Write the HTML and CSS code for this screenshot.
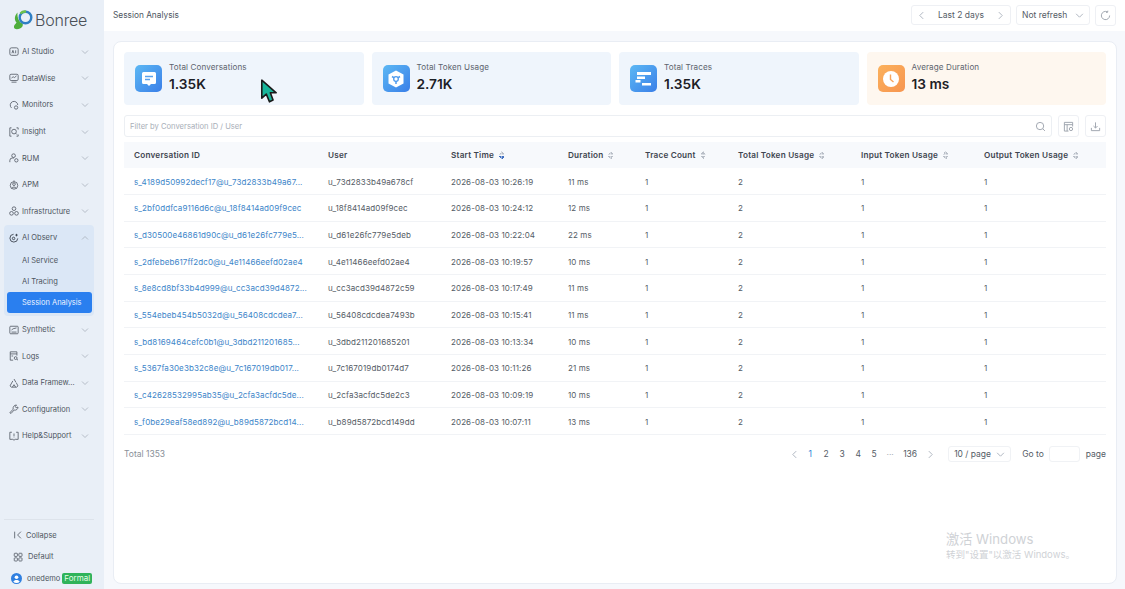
FILE: index.html
```html
<!DOCTYPE html>
<html lang="en">
<head>
    <meta charset="UTF-8">
    <meta name="viewport" content="width=device-width, initial-scale=1.0">
    <title>Session Analysis</title>
    <link rel="stylesheet" href="styles.css">
</head>
<body>
<div class="app">
    <aside class="sidebar">
        <div class="logo">
            <svg class="logo-mark" viewBox="0 0 22 22"><path d="M4.500 3.500C1.500 6.500 1 11 3.500 13.500 2.500 15 .5 16.500 1 18.500 1.500 20.500 4.500 20.500 7 19.500 9.500 18.500 10.500 16 9.500 14.500 6.500 13.500 4 9 4.500 3.500z" fill="#4fae3c"/><circle cx="12.500" cy="8.500" r="5.800" fill="none" stroke="#2f7fc4" stroke-width="2.400"/><path d="M7.500 4.500A6 6 0 0 1 13 2.700" fill="none" stroke="#6fc24a" stroke-width="2.400"/></svg>
            <span class="logo-text">Bonree</span>
        </div>
        <nav class="nav">
            <div class="nav-item">
                <svg class="nav-icon" viewBox="0 0 12 12"><rect x="1" y="1" width="10" height="9" rx="2"/><path d="M3.500 7.500 4.700 4l1.200 3.500M8 4v3.500"/></svg>
                <span class="nav-label">AI Studio</span>
                <svg class="chev" viewBox="0 0 8 8"><path d="M1 2.500 4 5.500 7 2.500"/></svg>
            </div>
            <div class="nav-item">
                <svg class="nav-icon" viewBox="0 0 12 12"><rect x="1" y="1.500" width="10" height="7.500" rx="1.500"/><path d="M3 6 5 4.500 6.500 5.500 9 3.500M3 11h6"/></svg>
                <span class="nav-label">DataWise</span>
                <svg class="chev" viewBox="0 0 8 8"><path d="M1 2.500 4 5.500 7 2.500"/></svg>
            </div>
            <div class="nav-item">
                <svg class="nav-icon" viewBox="0 0 12 12"><path d="M3 9.500A4.500 4.500 0 1 1 10.500 6"/><circle cx="8.500" cy="9" r="2"/></svg>
                <span class="nav-label">Monitors</span>
                <svg class="chev" viewBox="0 0 8 8"><path d="M1 2.500 4 5.500 7 2.500"/></svg>
            </div>
            <div class="nav-item">
                <svg class="nav-icon" viewBox="0 0 12 12"><path d="M3 1H1v10h2M9 1h2v2M11 9v2H9"/><circle cx="6" cy="5.500" r="2.800"/><path d="M8 7.500 9.500 9"/></svg>
                <span class="nav-label">Insight</span>
                <svg class="chev" viewBox="0 0 8 8"><path d="M1 2.500 4 5.500 7 2.500"/></svg>
            </div>
            <div class="nav-item">
                <svg class="nav-icon" viewBox="0 0 12 12"><circle cx="5.500" cy="3.200" r="2.200"/><path d="M1 11V9a3 3 0 0 1 3-3h2"/><circle cx="8.800" cy="8.800" r="2"/></svg>
                <span class="nav-label">RUM</span>
                <svg class="chev" viewBox="0 0 8 8"><path d="M1 2.500 4 5.500 7 2.500"/></svg>
            </div>
            <div class="nav-item">
                <svg class="nav-icon" viewBox="0 0 12 12"><circle cx="6" cy="6.500" r="4.500"/><circle cx="6" cy="5" r="1.600"/><path d="M3.200 10c.5-2 5-2 5.600 0M6 .5v1.500"/></svg>
                <span class="nav-label">APM</span>
                <svg class="chev" viewBox="0 0 8 8"><path d="M1 2.500 4 5.500 7 2.500"/></svg>
            </div>
            <div class="nav-item">
                <svg class="nav-icon" viewBox="0 0 12 12"><circle cx="6" cy="3.200" r="2.200"/><circle cx="3" cy="8.800" r="2.200"/><circle cx="9" cy="8.800" r="2.200"/></svg>
                <span class="nav-label">Infrastructure</span>
                <svg class="chev" viewBox="0 0 8 8"><path d="M1 2.500 4 5.500 7 2.500"/></svg>
            </div>
            <div class="nav-group">
                <div class="nav-item">
                    <svg class="nav-icon nav-icon-dark" viewBox="0 0 12 12"><path d="M10.500 6.500A4.700 4.700 0 1 1 5.500 1.500"/><circle cx="5.500" cy="6.500" r="1.500"/><path d="M9 1v3M7.500 2.500h3"/></svg>
                    <span class="nav-label">AI Observ</span>
                    <svg class="chev" viewBox="0 0 8 8"><path d="M1 5.500 4 2.500 7 5.500"/></svg>
                </div>
                <div class="sub-list">
                    <div class="sub-item">AI Service</div>
                    <div class="sub-item">AI Tracing</div>
                    <div class="sub-item sub-active">Session Analysis</div>
                </div>
            </div>
            <div class="nav-item">
                <svg class="nav-icon" viewBox="0 0 12 12"><rect x="1" y="1.500" width="10" height="9" rx="1"/><path d="M3 6 5 4.500 9 3.500M3 8.500h6"/></svg>
                <span class="nav-label">Synthetic</span>
                <svg class="chev" viewBox="0 0 8 8"><path d="M1 2.500 4 5.500 7 2.500"/></svg>
            </div>
            <div class="nav-item">
                <svg class="nav-icon" viewBox="0 0 12 12"><path d="M5 11H1.500V1h8v4.500M1.500 3.500h8M3 6h2"/><circle cx="8" cy="8.500" r="1.700"/><path d="M9.300 9.800 10.800 11"/></svg>
                <span class="nav-label">Logs</span>
                <svg class="chev" viewBox="0 0 8 8"><path d="M1 2.500 4 5.500 7 2.500"/></svg>
            </div>
            <div class="nav-item">
                <svg class="nav-icon" viewBox="0 0 12 12"><path d="M6 1.200 8.200 5M4.600 3.500 1.200 9.500 3 11h6l1.800-1.500L8.600 5.500M4 11l2-3 2 3"/></svg>
                <span class="nav-label">Data Framew...</span>
                <svg class="chev" viewBox="0 0 8 8"><path d="M1 2.500 4 5.500 7 2.500"/></svg>
            </div>
            <div class="nav-item">
                <svg class="nav-icon" viewBox="0 0 12 12"><path d="M1 10.500 5 6.200C4.300 4 6 1 9 1.200L7.500 3.200 8.600 4.600l2.200-1C11 6 8.500 8 6.200 7.200L2.500 11.300z"/></svg>
                <span class="nav-label">Configuration</span>
                <svg class="chev" viewBox="0 0 8 8"><path d="M1 2.500 4 5.500 7 2.500"/></svg>
            </div>
            <div class="nav-item">
                <svg class="nav-icon" viewBox="0 0 12 12"><path d="M3.500 1.500H1v8.500h3.500L6 11l1.500-1H11V1.500H8.500M6 3v3.500M6 8v.5"/></svg>
                <span class="nav-label">Help&amp;Support</span>
                <svg class="chev" viewBox="0 0 8 8"><path d="M1 2.500 4 5.500 7 2.500"/></svg>
            </div>
        </nav>
        <div class="side-foot">
            <div class="foot-row foot-collapse">
                <svg class="foot-icon" viewBox="0 0 12 12"><path d="M2 2v8M9.500 2 5.500 6l4 4"/></svg>
                <span>Collapse</span>
            </div>
            <div class="foot-row foot-default">
                <svg class="foot-icon" viewBox="0 0 12 12"><rect x="1.500" y="1.500" width="3.800" height="3.800" rx=".8"/><rect x="7" y="1.500" width="3.800" height="3.800" rx=".8"/><rect x="1.500" y="7" width="3.800" height="3.800" rx=".8"/><rect x="7" y="7" width="3.800" height="3.800" rx=".8"/></svg>
                <span>Default</span>
            </div>
            <div class="foot-row foot-user">
                <svg class="avatar" viewBox="0 0 12 12"><circle cx="6" cy="6" r="6" fill="#2f7fe0"/><circle cx="6" cy="4.600" r="2" fill="#fff"/><path d="M2.500 9.500c1-2.500 6-2.500 7 0a5 5 0 0 1-7 0z" fill="#fff"/></svg>
                <span>onedemo</span>
                <span class="formal">Formal</span>
            </div>
        </div>
    </aside>

    <div class="page">
        <header class="topbar">
            <div class="page-title">Session Analysis</div>
            <div class="top-tools">
                <div class="tool range">
                    <svg class="chev chev-lg" viewBox="0 0 8 8"><path d="M5.500 1 2.500 4l3 3"/></svg>
                    <span>Last 2 days</span>
                    <svg class="chev chev-lg" viewBox="0 0 8 8"><path d="M2.500 1l3 3-3 3"/></svg>
                </div>
                <div class="tool refresh-select">
                    <span>Not refresh</span>
                    <svg class="chev chev-lg" viewBox="0 0 8 8"><path d="M1 2.500 4 5.500 7 2.500"/></svg>
                </div>
                <div class="tool tool-square">
                    <svg class="tool-icon" viewBox="0 0 12 12"><path d="M10.500 6A4.500 4.500 0 1 1 8 2M8.500.8 8.300 2.500l-1.700.2"/></svg>
                </div>
            </div>
        </header>

        <main class="card">
            <section class="stats">
                <div class="stat">
                    <div class="stat-icon icon-blue">
                        <svg width="20" height="20" viewBox="0 0 20 20"><path d="M4.500 3h11A1.500 1.500 0 0 1 17 4.500v9a1.500 1.500 0 0 1-1.500 1.500H12l-2 2-2-2H4.500A1.500 1.500 0 0 1 3 13.500v-9A1.500 1.500 0 0 1 4.500 3z" fill="#fff"/><path d="M6 7.500h8M6 10.500h5" stroke="#5aa2ee" stroke-width="1.300"/></svg>
                    </div>
                    <div class="stat-text">
                        <div class="stat-label">Total Conversations</div>
                        <div class="stat-value">1.35K</div>
                    </div>
                </div>
                <div class="stat">
                    <div class="stat-icon icon-blue">
                        <svg width="20" height="20" viewBox="0 0 20 20"><path d="M10 1.500 17.500 5.500v9L10 18.500 2.500 14.500v-9z" fill="#fff"/><path d="M6 7.500 8.200 8.800M14 7.500 11.800 8.800M10 12v3" stroke="#4f9bee" stroke-width="1.500" fill="none"/><circle cx="10" cy="10" r="2.300" fill="none" stroke="#4f9bee" stroke-width="1.300"/></svg>
                    </div>
                    <div class="stat-text">
                        <div class="stat-label">Total Token Usage</div>
                        <div class="stat-value">2.71K</div>
                    </div>
                </div>
                <div class="stat">
                    <div class="stat-icon icon-blue">
                        <svg width="20" height="20" viewBox="0 0 20 20" fill="#fff"><rect x="3" y="3" width="14" height="3"/><rect x="3" y="7.500" width="8" height="2.500"/><rect x="1.500" y="11" width="5" height="2.500"/><rect x="8" y="14" width="9" height="2.500"/></svg>
                    </div>
                    <div class="stat-text">
                        <div class="stat-label">Total Traces</div>
                        <div class="stat-value">1.35K</div>
                    </div>
                </div>
                <div class="stat stat-warm">
                    <div class="stat-icon icon-orange">
                        <svg width="20" height="20" viewBox="0 0 20 20"><circle cx="10" cy="10" r="8" fill="#fff"/><path d="M9.500 5.500V10.500l3 2.500" stroke="#f7a45c" stroke-width="1.400" fill="none"/></svg>
                    </div>
                    <div class="stat-text">
                        <div class="stat-label">Average Duration</div>
                        <div class="stat-value">13 ms</div>
                    </div>
                </div>
            </section>

            <section class="filter-row">
                <div class="filter">
                    <span>Filter by Conversation ID / User</span>
                    <svg class="tool-icon" viewBox="0 0 12 12"><circle cx="5.500" cy="5.500" r="4"/><path d="M8.500 8.500 10.800 10.800"/></svg>
                </div>
                <div class="tool-square">
                    <svg class="tool-icon" viewBox="0 0 12 12"><path d="M6 11H1.500V1.500h9V6M1.500 4h9M4.500 4v7"/><circle cx="8.700" cy="8.700" r="1.800"/></svg>
                </div>
                <div class="tool-square">
                    <svg class="tool-icon" viewBox="0 0 12 12"><path d="M6 1.500v6M3.800 5.500 6 7.700l2.200-2.200M1.500 7.500v3h9v-3"/></svg>
                </div>
            </section>

            <table class="sessions">
                <thead>
                    <tr>
                        <th>Conversation ID</th>
                        <th>User</th>
                        <th class="sortable sorted">Start Time</th>
                        <th class="sortable">Duration</th>
                        <th class="sortable">Trace Count</th>
                        <th class="sortable">Total Token Usage</th>
                        <th class="sortable">Input Token Usage</th>
                        <th class="sortable">Output Token Usage</th>
                    </tr>
                </thead>
                <tbody>
                    <tr><td class="link">s_4189d50992decf17@u_73d2833b49a67...</td><td>u_73d2833b49a678cf</td><td>2026-08-03 10:26:19</td><td>11 ms</td><td>1</td><td>2</td><td>1</td><td>1</td></tr>
                    <tr><td class="link">s_2bf0ddfca9116d6c@u_18f8414ad09f9cec</td><td>u_18f8414ad09f9cec</td><td>2026-08-03 10:24:12</td><td>12 ms</td><td>1</td><td>2</td><td>1</td><td>1</td></tr>
                    <tr><td class="link">s_d30500e46861d90c@u_d61e26fc779e5...</td><td>u_d61e26fc779e5deb</td><td>2026-08-03 10:22:04</td><td>22 ms</td><td>1</td><td>2</td><td>1</td><td>1</td></tr>
                    <tr><td class="link">s_2dfebeb617ff2dc0@u_4e11466eefd02ae4</td><td>u_4e11466eefd02ae4</td><td>2026-08-03 10:19:57</td><td>10 ms</td><td>1</td><td>2</td><td>1</td><td>1</td></tr>
                    <tr><td class="link">s_8e8cd8bf33b4d999@u_cc3acd39d4872...</td><td>u_cc3acd39d4872c59</td><td>2026-08-03 10:17:49</td><td>11 ms</td><td>1</td><td>2</td><td>1</td><td>1</td></tr>
                    <tr><td class="link">s_554ebeb454b5032d@u_56408cdcdea7...</td><td>u_56408cdcdea7493b</td><td>2026-08-03 10:15:41</td><td>11 ms</td><td>1</td><td>2</td><td>1</td><td>1</td></tr>
                    <tr><td class="link">s_bd8169464cefc0b1@u_3dbd211201685...</td><td>u_3dbd211201685201</td><td>2026-08-03 10:13:34</td><td>10 ms</td><td>1</td><td>2</td><td>1</td><td>1</td></tr>
                    <tr><td class="link">s_5367fa30e3b32c8e@u_7c167019db017...</td><td>u_7c167019db0174d7</td><td>2026-08-03 10:11:26</td><td>21 ms</td><td>1</td><td>2</td><td>1</td><td>1</td></tr>
                    <tr><td class="link">s_c42628532995ab35@u_2cfa3acfdc5de...</td><td>u_2cfa3acfdc5de2c3</td><td>2026-08-03 10:09:19</td><td>10 ms</td><td>1</td><td>2</td><td>1</td><td>1</td></tr>
                    <tr><td class="link">s_f0be29eaf58ed892@u_b89d5872bcd14...</td><td>u_b89d5872bcd149dd</td><td>2026-08-03 10:07:11</td><td>13 ms</td><td>1</td><td>2</td><td>1</td><td>1</td></tr>
                </tbody>
            </table>

            <footer class="pager">
                <div class="total">Total 1353</div>
                <div class="pages">
                    <span class="page-no"><svg class="chev chev-lg" viewBox="0 0 8 8"><path d="M5.500 1 2.500 4l3 3"/></svg></span>
                    <span class="page-no page-current">1</span>
                    <span class="page-no">2</span>
                    <span class="page-no">3</span>
                    <span class="page-no">4</span>
                    <span class="page-no">5</span>
                    <span class="page-no page-dots">···</span>
                    <span class="page-no page-wide">136</span>
                    <span class="page-no"><svg class="chev chev-lg" viewBox="0 0 8 8"><path d="M2.500 1l3 3-3 3"/></svg></span>
                </div>
                <div class="page-size">
                    <span>10 / page</span>
                    <svg class="chev chev-lg" viewBox="0 0 8 8"><path d="M1 2.500 4 5.500 7 2.500"/></svg>
                </div>
                <div class="goto">
                    <span>Go to</span>
                    <span class="goto-input"></span>
                    <span>page</span>
                </div>
            </footer>
        </main>
    </div>
</div>

<svg class="cursor" width="18" height="26" viewBox="0 0 20 28"><path d="M2 2 2 22 7 17.500 10.500 26 14.500 24 11.500 16 18 16z" fill="#17b59a" stroke="#1a1a1a" stroke-width="1.800" stroke-linejoin="round"/></svg>
<div class="watermark">
    <div class="wm-title">激活 Windows</div>
    <div class="wm-sub">转到"设置"以激活 Windows。</div>
</div>
</body>
</html>
```

FILE: styles.css
```css
* {
    box-sizing: border-box;
}

body {
    margin: 0;
    font-family: Inter, "Noto Sans CJK SC", sans-serif;
    font-size: 8.5px;
    color: #555c66;
    background-color: #f6f8fc;
    overflow: hidden;
}

.app {
    display: flex;
    height: 589px;
}

/* Sidebar */
.sidebar {
    width: 104px;
    flex-shrink: 0;
    display: flex;
    flex-direction: column;
    background-color: #e9eff7;
    padding: 0 10px 0 4px;
}

.logo {
    display: flex;
    align-items: center;
    height: 38.5px;
    padding: 2px 0 0 9px;
    flex-shrink: 0;
}

.logo-mark {
    width: 22px;
    height: 22px;
    flex-shrink: 0;
}

.logo-text {
    font-size: 16px;
    font-weight: 300;
    color: #4a5058;
    letter-spacing: -0.2px;
}

.nav-item {
    display: flex;
    align-items: center;
    height: 26.6px;
    padding: 0 5px;
    font-size: 7.5px;
    color: #4d5560;
}

.nav-icon {
    width: 10px;
    height: 10px;
    flex-shrink: 0;
    margin-right: 3px;
    fill: none;
    stroke: #555c66;
    stroke-width: 1;
}

.nav-icon-dark {
    stroke: #333a44;
}

.nav-label {
    flex: 1;
    white-space: nowrap;
}

.chev {
    width: 8px;
    height: 8px;
    flex-shrink: 0;
    fill: none;
    stroke: #a7afba;
    stroke-width: 0.8;
}

.chev-lg {
    width: 9px;
    height: 9px;
}

.nav-group {
    background-color: #dbe7f6;
    border-radius: 4px;
    padding-bottom: 3px;
}

.sub-list {
    margin-top: -2px;
}

.sub-item {
    display: flex;
    align-items: center;
    height: 21.5px;
    padding-left: 18px;
    font-size: 7.5px;
    color: #4d5560;
}

.sub-active {
    height: 21px;
    margin: 0 2px 0 3px;
    padding-left: 15px;
    border-radius: 3px;
    color: #eaf3ff;
    background-color: #2a7fef;
}

.side-foot {
    margin-top: auto;
    border-top: 1px solid #dde3eb;
}

.foot-row {
    display: flex;
    align-items: center;
    height: 21.6px;
    font-size: 7.5px;
    color: #4d5560;
}

.foot-icon {
    width: 10px;
    height: 10px;
    flex-shrink: 0;
    fill: none;
    stroke: #555c66;
    stroke-width: 1;
}

.foot-collapse {
    padding-left: 9px;
    gap: 3px;
    margin-top: 4px;
}

.foot-default {
    padding-left: 9px;
    gap: 5px;
}

.foot-user {
    padding-left: 7px;
    gap: 4px;
}

.avatar {
    width: 11px;
    height: 11px;
    margin-right: 1px;
}

.formal {
    background-color: #2fb35a;
    color: #e6ffe8;
    border-radius: 2px;
    padding: 1px 2px;
    font-size: 8px;
    line-height: 9px;
    margin-left: -2px;
}

/* Top bar */
.page {
    flex: 1;
    min-width: 0;
    display: flex;
    flex-direction: column;
    padding: 0 8px 5px 9px;
}

.topbar {
    height: 31px;
    margin: 0 -8px 10px -9px;
    padding: 0 9px;
    display: flex;
    align-items: center;
    justify-content: space-between;
    background-color: #fff;
    flex-shrink: 0;
}

.page-title {
    font-size: 8.3px;
    color: #4d5560;
    margin-top: -1px;
}

.top-tools {
    display: flex;
    gap: 5px;
    color: #555c66;
}

.tool {
    display: flex;
    align-items: center;
    height: 20px;
    border: 1px solid #eef0f4;
    border-radius: 3px;
    background-color: #fff;
}

.range {
    width: 100px;
    padding: 0 5px;
    justify-content: space-between;
}

.refresh-select {
    width: 74px;
    padding: 0 5px;
    justify-content: space-between;
}

.tool-square {
    width: 21px;
    height: 21px;
    display: flex;
    align-items: center;
    justify-content: center;
    border: 1px solid #eef0f4;
    border-radius: 3px;
    background-color: #fff;
}

.tool-icon {
    width: 11px;
    height: 11px;
    fill: none;
    stroke: #9aa1ab;
    stroke-width: 1;
}

/* Main card */
.card {
    flex: 1;
    background-color: #fff;
    border: 1px solid #e9edf4;
    border-radius: 8px;
    padding: 10px 10px 0;
}

.stats {
    display: grid;
    grid-template-columns: repeat(4, 1fr);
    gap: 8px;
}

.stat {
    height: 53px;
    display: flex;
    align-items: center;
    gap: 7px;
    padding-left: 11px;
    border-radius: 4px;
    background-color: #eff5fc;
}

.stat-warm {
    background-color: #fef7ef;
}

.stat-icon {
    width: 27px;
    height: 27px;
    border-radius: 5px;
    display: flex;
    align-items: center;
    justify-content: center;
}

.icon-blue {
    background: linear-gradient(135deg, #5cb8f4, #3a7fe8);
}

.icon-orange {
    background: linear-gradient(135deg, #fbb15c, #f79550);
}

.stat-text {
    margin-bottom: 3px;
}

.stat-label {
    font-size: 8.1px;
    color: #5d646e;
    letter-spacing: 0.1px;
}

.stat-value {
    font-size: 13.7px;
    font-weight: 600;
    color: #1c2026;
    margin-top: 4px;
}

.filter-row {
    display: flex;
    gap: 6px;
    margin-top: 10px;
    height: 22px;
}

.filter {
    flex: 1;
    display: flex;
    align-items: center;
    justify-content: space-between;
    padding: 0 5px;
    font-size: 7.6px;
    border: 1px solid #eceff3;
    border-radius: 3px;
    color: #a8aeb7;
}

.filter-row .tool-square {
    height: 22px;
}

/* Table */
.sessions {
    width: 100%;
    table-layout: fixed;
    border-collapse: collapse;
    margin-top: 5px;
}

.sessions th {
    height: 26px;
    padding: 0 0 0 10px;
    text-align: left;
    font-weight: 600;
    font-size: 8.2px;
    letter-spacing: 0.2px;
    color: #3f4650;
    background-color: #f7f9fc;
    white-space: nowrap;
}

.sessions th:nth-child(1) { width: 194px; }
.sessions th:nth-child(2) { width: 123px; }
.sessions th:nth-child(3) { width: 117px; }
.sessions th:nth-child(4) { width: 77px; }
.sessions th:nth-child(5) { width: 93px; }
.sessions th:nth-child(6) { width: 123px; }
.sessions th:nth-child(7) { width: 123px; }

.sortable::after {
    content: "";
    display: inline-block;
    width: 5px;
    height: 8px;
    margin-left: 5px;
    vertical-align: -1px;
    background:
        linear-gradient(135deg, transparent 50%, #b8bec7 50%) 0 0 / 2.5px 3.5px no-repeat,
        linear-gradient(225deg, transparent 50%, #b8bec7 50%) 2.5px 0 / 2.5px 3.5px no-repeat,
        linear-gradient(45deg, transparent 50%, #b8bec7 50%) 0 4.5px / 2.5px 3.5px no-repeat,
        linear-gradient(315deg, transparent 50%, #b8bec7 50%) 2.5px 4.5px / 2.5px 3.5px no-repeat;
}

.sorted::after {
    background:
        linear-gradient(135deg, transparent 50%, #b8bec7 50%) 0 0 / 2.5px 3.5px no-repeat,
        linear-gradient(225deg, transparent 50%, #b8bec7 50%) 2.5px 0 / 2.5px 3.5px no-repeat,
        linear-gradient(45deg, transparent 50%, #3f6fc0 50%) 0 4.5px / 2.5px 3.5px no-repeat,
        linear-gradient(315deg, transparent 50%, #3f6fc0 50%) 2.5px 4.5px / 2.5px 3.5px no-repeat;
}

.sessions td {
    height: 26.67px;
    padding: 1px 0 0 10px;
    border-bottom: 1px solid #f1f3f6;
    font-size: 8px;
    letter-spacing: 0.1px;
    color: #555c66;
    white-space: nowrap;
    overflow: hidden;
}

.sessions td.link {
    color: #3d85c9;
}

/* Pagination */
.pager {
    display: flex;
    align-items: center;
    margin-top: 10px;
    height: 18px;
    color: #555c66;
}

.total {
    flex: 1;
    color: #8a9099;
}

.pages {
    display: flex;
    align-items: center;
}

.page-no {
    display: flex;
    align-items: center;
    justify-content: center;
    width: 16px;
}

.page-wide {
    width: 24px;
}

.page-current {
    color: #2f86d6;
}

.page-dots {
    color: #a8aeb7;
}

.page-size {
    display: flex;
    align-items: center;
    justify-content: space-between;
    width: 63px;
    height: 16px;
    margin-left: 10px;
    padding: 0 5px;
    border: 1px solid #f0f2f5;
    border-radius: 3px;
}

.goto {
    display: flex;
    align-items: center;
    gap: 5.5px;
    margin-left: 11px;
}

.goto-input {
    width: 31px;
    height: 16px;
    border: 1px solid #f0f2f5;
    border-radius: 3px;
}

/* Overlays */
.cursor {
    position: absolute;
    left: 260px;
    top: 78px;
}

.watermark {
    position: absolute;
    left: 946px;
    top: 531px;
    color: #cfd2d6;
}

.wm-title {
    font-size: 13.2px;
    line-height: 17px;
}

.wm-sub {
    font-size: 9.5px;
    line-height: 14px;
}
```
